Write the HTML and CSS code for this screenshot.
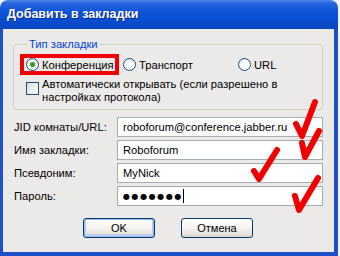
FILE: index.html
```html
<!DOCTYPE html>
<html lang="ru">
<head>
    <meta charset="UTF-8">
    <title>Добавить в закладки</title>
    <link rel="stylesheet" href="styles.css">
</head>
<body>
    <!-- BEGIN::window -->
    <div class="window">
        <div class="titlebar">Добавить в закладки</div>
        <div class="client">
            <!-- BEGIN::type group -->
            <fieldset class="group">
                <legend>Тип закладки</legend>
                <div class="radios">
                    <label class="radio marked"><span class="dot checked"></span>Конференция</label>
                    <label class="radio"><span class="dot"></span>Транспорт</label>
                    <label class="radio url"><span class="dot"></span>URL</label>
                </div>
                <label class="check"><span class="box"></span><span>Автоматически открывать (если разрешено в настройках протокола)</span></label>
            </fieldset>
            <!-- END::type group -->
            <!-- BEGIN::fields -->
            <div class="fields">
                <span class="label">JID комнаты/URL:</span>
                <div class="input">roboforum@conference.jabber.ru</div>
                <span class="label">Имя закладки:</span>
                <div class="input">Roboforum</div>
                <span class="label">Псевдоним:</span>
                <div class="input">MyNick</div>
                <span class="label">Пароль:</span>
                <div class="input"><span class="dots">●●●●●●●</span><span class="caret"></span></div>
            </div>
            <!-- END::fields -->
            <div class="buttons">
                <button class="btn default">OK</button>
                <button class="btn">Отмена</button>
            </div>
        </div>
        <!-- red marks drawn over the screenshot -->
        <svg class="marks" width="340" height="256" viewBox="0 0 340 256">
            <g fill="none" stroke="#f00000" stroke-width="6" stroke-linecap="round" stroke-linejoin="round">
                <path d="M296 124 L302 136 L315 102"/>
                <path d="M302 143 L305 157 L319 131"/>
                <path d="M254 171 L259 179 L277 150"/>
                <path d="M295 196 L299 210 L318 178"/>
            </g>
        </svg>
    </div>
    <!-- END::window -->
</body>
</html>
```

FILE: styles.css
```css
*{
    margin: 0;
    padding: 0;
    box-sizing: border-box;
}

body{
    width: 340px;
    height: 256px;
    background: #f4f4f4;
    font-family: 'Liberation Sans', Arial, sans-serif;
    font-size: 11.2px;
    color: #000;
    overflow: hidden;
}

.window{
    position: relative;
    width: 338px;
    height: 256px;
    display: flex;
    flex-direction: column;
}

.titlebar{
    height: 29px;
    flex: none;
    padding: 7px 0 0 7px;
    border-radius: 8px 8px 0 0;
    background: linear-gradient(#4a88ee 0, #2664e0 12%, #0f54d6 40%, #0a4dd0 70%, #0944be 100%);
    color: #fff;
    font-weight: bold;
    font-size: 12.5px;
    text-shadow: 1px 1px 0 #0a2a8a;
}

.client{
    flex: 1;
    background: #eceae8;
    border-left: 3px solid #1d4fc9;
    border-right: 4px solid #1d4fc9;
    border-bottom: 4px solid #1d4fc9;
    padding: 9px 11px 0 10px;
}

.group{
    border: 1px solid #d0d0bf;
    border-radius: 3px;
    height: 72px;
    padding: 3px 6px 0 6px;
}

.group legend{
    color: #0046d5;
    margin-left: 7px;
    padding: 0 2px;
    line-height: 13px;
}

.radios{
    display: flex;
    align-items: center;
    height: 21px;
}

.radio{
    display: flex;
    align-items: center;
    gap: 3px;
    height: 21px;
}

.radio.marked{
    border: 4px solid #f00000;
    width: 99px;
    padding-left: 2px;
}

.radio:nth-child(2){
    margin-left: 4px;
    width: 115px;
}

.dot{
    width: 13px;
    height: 13px;
    border: 1px solid #1c5180;
    border-radius: 50%;
    background: radial-gradient(circle at 60% 60%, #fff 40%, #dcdcd6 100%);
    display: grid;
    place-items: center;
}

.dot.checked::after{
    content: "";
    width: 5px;
    height: 5px;
    border-radius: 50%;
    background: #21a121;
}

.check{
    display: flex;
    gap: 3px;
    margin-top: 3px;
    padding-left: 6px;
    line-height: 13px;
}

.box{
    flex: none;
    width: 13px;
    height: 13px;
    margin-top: 4px;
    border: 1px solid #1c5180;
    background: linear-gradient(135deg, #dcdcd6, #fff);
}

.fields{
    display: grid;
    grid-template-columns: 104px 206px;
    grid-auto-rows: 20px;
    row-gap: 3px;
    margin-top: 7px;
    align-items: center;
}

.label{
    padding-left: 1px;
}

.input{
    height: 20px;
    border: 1px solid #a5acb2;
    background: #fff;
    padding-left: 5px;
    display: flex;
    align-items: center;
}

.dots{
    font-family: 'DejaVu Sans', sans-serif;
    font-size: 8px;
    letter-spacing: 1.6px;
}

.caret{
    width: 1px;
    height: 14px;
    background: #000;
}

.buttons{
    display: flex;
    justify-content: center;
    gap: 26px;
    margin-top: 12px;
}

.btn{
    width: 72px;
    height: 20px;
    border: 1px solid #003c74;
    border-radius: 3px;
    background: linear-gradient(#fff 0, #f3f2ee 50%, #e6e4dc 85%, #d6d0c5 100%);
    font-family: 'Liberation Sans', Arial, sans-serif;
    font-size: 11px;
    color: #000;
}

.btn.default{
    box-shadow: inset 0 0 0 1px #9db9eb, inset 0 -1px 0 2px #bccff1;
}

.marks{
    position: absolute;
    top: 0;
    left: 0;
    pointer-events: none;
}
```
